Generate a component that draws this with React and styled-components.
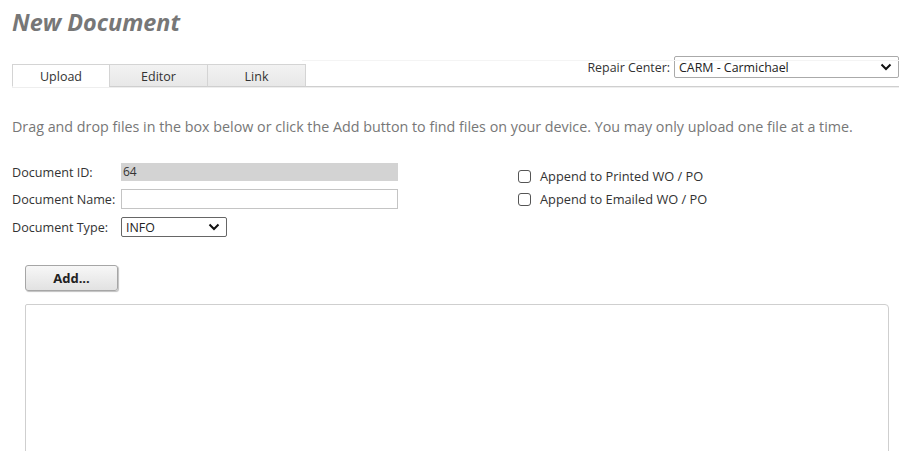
import React from "react";
import styled, { createGlobalStyle } from "styled-components";

const Global = createGlobalStyle`
  html, body { margin: 0; padding: 0; background: #fff; }
  body { font-family: "Open Sans", "Noto Sans", sans-serif; color: #333; }
`;

const Page = styled.div`
  width: 909px;
  height: 451px;
  overflow: hidden;
  box-sizing: border-box;
  padding: 8px 10px 0 12px;
`;

const Title = styled.h1`
  margin: 0;
  font-size: 23.4px;
  line-height: 28px;
  font-weight: 700;
  font-style: italic;
  color: #777;
`;

const TabStrip = styled.div`
  margin-top: 26px;
  display: flex;
  align-items: flex-end;
  justify-content: space-between;
  height: 24px;
  border-bottom: 1px solid #cfcfcf;
  box-shadow: 0 1px 0 #eee;
  position: relative;
  &::before {
    content: "";
    position: absolute;
    left: 290px;
    right: 0;
    top: -2px;
    border-top: 1px solid #f4f4f4;
  }
`;

const Tabs = styled.div`
  display: flex;
  align-self: flex-end;
  margin-bottom: -1px;
`;

const Tab = styled.div`
  width: ${(p) => (p.$first ? "98px" : "99px")};
  height: 23px;
  box-sizing: border-box;
  border: 1px solid #d4d4d4;
  border-bottom: ${(p) => (p.$active ? "1px solid #fff" : "1px solid #cfcfcf")};
  margin-left: ${(p) => (p.$first ? "0" : "-1px")};
  background: ${(p) => (p.$active ? "#fff" : "linear-gradient(#f2f2f2, #e8e8e8)")};
  font-size: 12.5px;
  line-height: 23px;
  text-align: center;
  color: #333;
`;

const RepairCenter = styled.div`
  display: flex;
  align-items: center;
  gap: 4px;
  margin-bottom: 8px;
  font-size: 12.4px;
  color: #333;
`;

const SelectBox = styled.div`
  box-sizing: border-box;
  width: ${(p) => p.$w}px;
  height: ${(p) => p.$h}px;
  border: 1px solid ${(p) => p.$border || "#aaa"};
  border-radius: 2px;
  display: flex;
  align-items: center;
  justify-content: space-between;
  padding: 0 6px 0 4px;
  font-size: 12.4px;
  color: #222;
  background: #fff;
`;

const Chevron = () => (
  <svg width="12" height="8" viewBox="0 0 12 8">
    <path d="M1.5 1.5 L6 6 L10.5 1.5" fill="none" stroke="#111" strokeWidth="2" />
  </svg>
);

const Instructions = styled.p`
  margin: 30px 0 0 0;
  font-size: 14.3px;
  line-height: 20px;
  color: #777;
  white-space: nowrap;
`;

const FormArea = styled.div`
  margin-top: 26px;
  display: flex;
`;

const Fields = styled.div`
  display: grid;
  grid-template-columns: 109px 277px;
  row-gap: 8px;
  align-items: center;
`;

const Label = styled.div`
  font-size: 12.6px;
  color: #333;
  white-space: nowrap;
`;

const ReadOnly = styled.div`
  height: 18px;
  background: #d3d3d3;
  font-size: 12px;
  line-height: 18px;
  padding-left: 2px;
  color: #333;
`;

const TextInput = styled.div`
  box-sizing: border-box;
  height: 20px;
  border: 1px solid #c4c4c4;
  background: #fff;
`;

const Checks = styled.div`
  margin-left: 120px;
  margin-top: 5px;
  display: flex;
  flex-direction: column;
  gap: 6px;
`;

const CheckRow = styled.label`
  display: flex;
  align-items: center;
  gap: 9px;
  font-size: 12.8px;
  color: #333;
  line-height: 17px;
`;

const Box = styled.span`
  width: 13px;
  height: 13px;
  box-sizing: border-box;
  border: 1px solid #555;
  border-radius: 3px;
  background: #fff;
`;

const AddButton = styled.button`
  display: block;
  margin: 28px 0 0 13px;
  width: 93px;
  height: 26px;
  border: 1px solid #a6a6a6;
  border-radius: 3px;
  background: linear-gradient(#f7f7f7, #e2e2e2);
  box-shadow: 1px 1px 1px rgba(0, 0, 0, 0.25);
  font-family: inherit;
  font-size: 13px;
  font-weight: 700;
  color: #222;
  padding: 0;
`;

const DropZone = styled.div`
  margin: 13px 0 0 13px;
  width: 864px;
  height: 200px;
  box-sizing: border-box;
  border: 1px solid #cfcfcf;
  border-radius: 2px 4px 0 0;
`;

export default function App() {
  return (
    <>
      <Global />
      <Page>
        <Title>New Document</Title>
        <TabStrip>
          <Tabs>
            <Tab $active $first>Upload</Tab>
            <Tab>Editor</Tab>
            <Tab>Link</Tab>
          </Tabs>
          <RepairCenter>
            <span>Repair Center:</span>
            <SelectBox $w={225} $h={22}>
              <span>CARM - Carmichael</span>
              <Chevron />
            </SelectBox>
          </RepairCenter>
        </TabStrip>
        <Instructions>
          Drag and drop files in the box below or click the Add button to find files on your device. You may only upload one file at a time.
        </Instructions>
        <FormArea>
          <Fields>
            <Label>Document ID:</Label>
            <ReadOnly>64</ReadOnly>
            <Label>Document Name:</Label>
            <TextInput />
            <Label>Document Type:</Label>
            <SelectBox $w={106} $h={20} $border="#666">
              <span>INFO</span>
              <Chevron />
            </SelectBox>
          </Fields>
          <Checks>
            <CheckRow><Box />Append to Printed WO / PO</CheckRow>
            <CheckRow><Box />Append to Emailed WO / PO</CheckRow>
          </Checks>
        </FormArea>
        <AddButton>Add...</AddButton>
        <DropZone />
      </Page>
    </>
  );
}
